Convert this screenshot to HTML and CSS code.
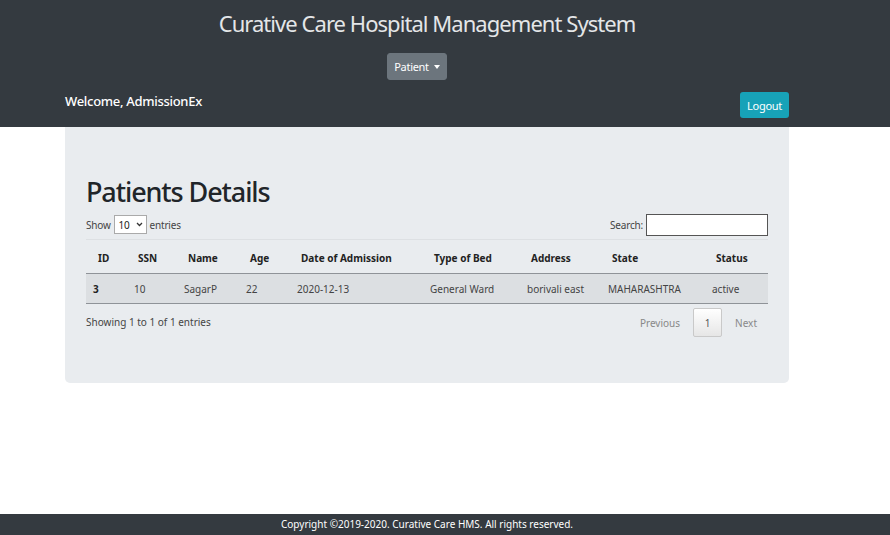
FILE: index.html
```html
<!DOCTYPE html>
<html>
<head>
<meta charset="utf-8">
<link rel="stylesheet" href="styles.css">
</head>
<body>
<div class="page">
  <header class="topbar">
    <h1 class="brand">Curative Care Hospital Management System</h1>
    <div class="navrow">
      <button class="btn-patient">Patient <span class="caret"></span></button>
    </div>
    <div class="userrow">
      <span class="welcome">Welcome, AdmissionEx</span>
      <button class="btn-logout">Logout</button>
    </div>
  </header>
  <main class="main">
    <section class="jumbo">
      <h2 class="title">Patients Details</h2>
      <div class="controls">
        <label class="length">Show <span class="select">10 <svg width="7" height="5" viewBox="0 0 7 5"><path d="M1 1l2.5 2.5L6 1" fill="none" stroke="#333" stroke-width="1.3"/></svg></span> entries</label>
        <label class="search">Search: <span class="input"></span></label>
      </div>
      <table class="grid">
        <colgroup>
          <col style="width:40px"><col style="width:50px"><col style="width:62px"><col style="width:51px"><col style="width:133px"><col style="width:97px"><col style="width:81px"><col style="width:104px"><col style="width:64px">
        </colgroup>
        <thead>
          <tr><th>ID</th><th>SSN</th><th>Name</th><th>Age</th><th>Date of Admission</th><th>Type of Bed</th><th>Address</th><th>State</th><th>Status</th></tr>
        </thead>
        <tbody>
          <tr><td class="id">3</td><td>10</td><td>SagarP</td><td>22</td><td>2020-12-13</td><td>General Ward</td><td>borivali east</td><td>MAHARASHTRA</td><td>active</td></tr>
        </tbody>
      </table>
      <div class="footrow">
        <span class="info">Showing 1 to 1 of 1 entries</span>
        <div class="pager">
          <span class="pg">Previous</span>
          <span class="pg current">1</span>
          <span class="pg">Next</span>
        </div>
      </div>
    </section>
  </main>
  <footer class="footer">Copyright ©2019-2020. Curative Care HMS. All rights reserved.</footer>
</div>
</body>
</html>
```

FILE: styles.css
```css
* { box-sizing: border-box; }
html, body { margin: 0; padding: 0; }
body {
  font-family: "Noto Sans", "Open Sans", sans-serif;
  color: #212529;
  background: #fff;
}
.page {
  display: flex;
  flex-direction: column;
  min-height: 100vh;
}
.topbar {
  background: #343a40;
  height: 127px;
  display: flex;
  flex-direction: column;
  align-items: center;
}
.brand {
  margin: 8px 0 0;
  padding-right: 36px;
  height: 30px;
  line-height: 30px;
  font-size: 22px;
  font-weight: 400;
  color: #e4e6e8;
  letter-spacing: -0.95px;
}
.navrow {
  margin-top: 15px;
  margin-right: 56px;
}
.btn-patient {
  font-family: inherit;
  background: #6c757d;
  color: #fff;
  border: 1px solid #6c757d;
  border-radius: 3px;
  height: 27px;
  width: 60px;
  font-size: 11px;
  letter-spacing: -0.3px;
  padding: 0;
  display: flex;
  align-items: center;
  justify-content: center;
  gap: 5px;
}
.caret {
  display: inline-block;
  width: 0; height: 0;
  border-left: 3px solid transparent;
  border-right: 3px solid transparent;
  border-top: 4px solid #fff;
}
.userrow {
  align-self: flex-start;
  margin-left: 65px;
  width: 724px;
  margin-top: 12px;
  display: flex;
  justify-content: space-between;
  align-items: flex-start;
}
.welcome {
  color: #fff;
  font-size: 13px;
  font-weight: 500;
  line-height: 18px;
  letter-spacing: -0.3px;
}
.btn-logout {
  font-family: inherit;
  background: #17a2b8;
  color: #fff;
  border: 0;
  border-radius: 3px;
  height: 26px;
  width: 49px;
  font-size: 11px;
  letter-spacing: -0.3px;
  padding: 0;
}
.main {
  flex: 1;
}
.jumbo {
  margin-left: 65px;
  width: 724px;
  height: 256px;
  background: #e9ecef;
  border-radius: 0 0 5px 5px;
  padding: 47px 21px 0;
}
.title {
  margin: 0;
  font-size: 27px;
  font-weight: 500;
  line-height: 36px;
  letter-spacing: -1.1px;
  color: #212529;
}
.controls {
  display: flex;
  justify-content: space-between;
  align-items: center;
  height: 23px;
  margin-top: 3px;
  font-size: 10px;
  color: #444;
  letter-spacing: -0.2px;
}
.length { display: flex; align-items: center; gap: 3px; }
.select {
  display: inline-flex;
  align-items: center;
  justify-content: space-between;
  width: 33px;
  height: 19px;
  background: #fff;
  border: 1px solid #aaa;
  padding: 0 3px 0 4px;
  font-size: 10px;
  color: #222;
}
.search { display: flex; align-items: center; gap: 3px; }
.input {
  display: inline-block;
  width: 122px;
  height: 22px;
  background: #fff;
  border: 1px solid #555;
}
.grid {
  margin-top: 3px;
  width: 682px;
  border-collapse: collapse;
  table-layout: fixed;
  font-size: 10px;
}
.grid thead tr { border-top: 1px solid #dde0e3; }
.grid th {
  text-align: left;
  font-weight: 700;
  color: #222;
  padding: 2px 0 0 12px;
  height: 34px;
  border-bottom: 1px solid #8f9398;
  white-space: nowrap;
}
.grid td {
  padding: 1px 0 0 8px;
  height: 30px;
  color: #444;
  background: #dcdfe2;
  border-bottom: 1px solid #8f9398;
  white-space: nowrap;
}
.grid td.id { font-weight: 700; color: #222; padding-left: 7px; }
.footrow {
  display: flex;
  justify-content: space-between;
  align-items: flex-start;
  margin-top: 4px;
  font-size: 10px;
  color: #444;
}
.info { margin-top: 7px; }
.pager {
  display: flex;
  align-items: center;
  margin-right: 0;
}
.pg {
  color: #888;
  padding: 0 11px;
}
.pg.current {
  width: 29px;
  height: 29px;
  padding: 0;
  display: flex;
  align-items: center;
  justify-content: center;
  color: #555;
  background: linear-gradient(#fff, #e6e6e6);
  border: 1px solid #c9c9c9;
  border-radius: 2px;
  margin: 0 2px;
}
.footer {
  height: 21px;
  background: #343a40;
  color: #fff;
  font-size: 10px;
  line-height: 21px;
  text-align: center;
  padding-right: 36px;
}
```
